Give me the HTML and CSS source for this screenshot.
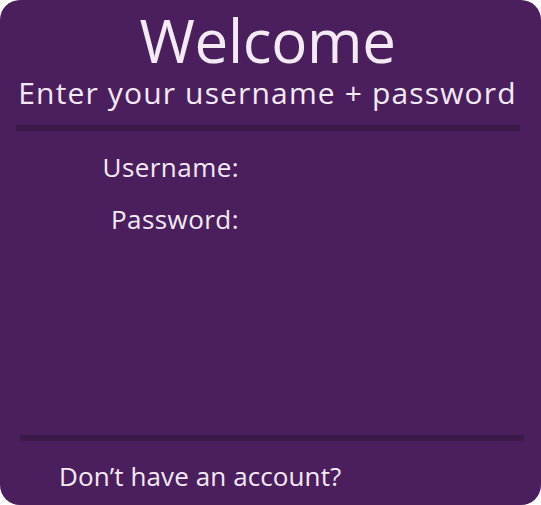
FILE: index.html
```html
<!DOCTYPE html>
<html lang="en">
<head>
<meta charset="utf-8">
<title>Welcome</title>
<link rel="stylesheet" href="styles.css">
</head>
<body>
<div class="card">
  <header class="head">
    <h1 class="title">Welcome</h1>
    <p class="subtitle">Enter your username + password</p>
  </header>
  <div class="divider divider-top"></div>
  <form class="form">
    <label class="label">Username:</label>
    <span class="field"></span>
    <label class="label">Password:</label>
    <span class="field"></span>
  </form>
  <div class="divider divider-bottom"></div>
  <p class="footer">Don’t have an account?</p>
</div>
</body>
</html>
```
FILE: styles.css
```css
html, body {
  margin: 0;
  padding: 0;
  background: #ffffff;
}
body {
  font-family: "Open Sans", Lato, sans-serif;
  color: #f3eaf3;
}
.card {
  box-sizing: border-box;
  width: 541px;
  height: 505px;
  background: #4b1f5e;
  border-radius: 20px;
  display: flex;
  flex-direction: column;
  overflow: hidden;
}
.head {
  display: flex;
  flex-direction: column;
  align-items: center;
  padding-right: 6px;
}
.title {
  margin: 10px 0 0;
  font-size: 60px;
  line-height: 60px;
  font-weight: 400;
  letter-spacing: -0.3px;
}
.subtitle {
  margin: 5px 0 0;
  font-size: 30px;
  line-height: 36px;
  letter-spacing: 1.15px;
}
.divider {
  height: 6px;
  background: #3b1a4a;
}
.divider-top {
  margin: 14px 21px 0 16px;
}
.form {
  display: grid;
  grid-template-columns: 239px 1fr;
  row-gap: 20px;
  margin-top: 20px;
}
.label {
  font-size: 26px;
  line-height: 32px;
  text-align: right;
  letter-spacing: 0.45px;
}
.divider-bottom {
  margin: auto 17px 0 20px;
}
.footer {
  margin: 19px 0 13px 59px;
  font-size: 26px;
  line-height: 32px;
  letter-spacing: 0.1px;
}
```
